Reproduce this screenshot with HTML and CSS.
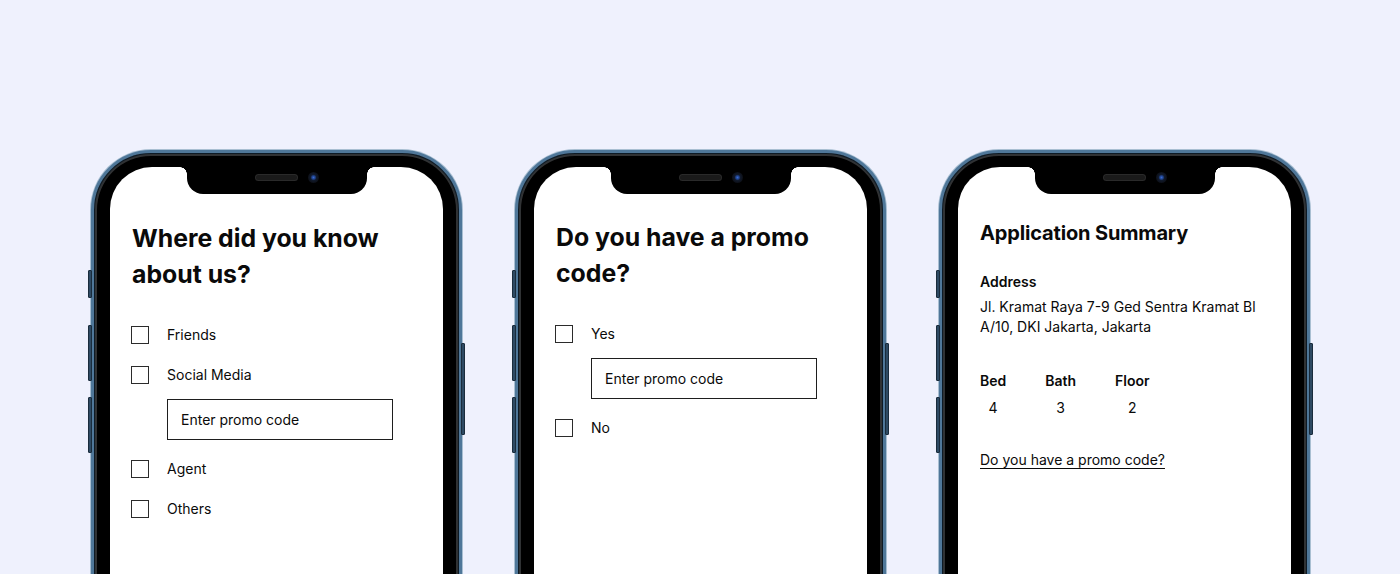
FILE: index.html
```html
<!DOCTYPE html>
<html lang="en">
<head>
<meta charset="utf-8">
<title>Onboarding screens</title>
<link rel="stylesheet" href="styles.css">
</head>
<body>
<div class="stage">
  <div class="phone">
    <span class="btn btn-l1"></span><span class="btn btn-l2"></span><span class="btn btn-l3"></span><span class="btn btn-r"></span>
    <div class="screen">
      <div class="notch"><span class="speaker"></span><span class="camera"></span></div>
      <h1 class="title">Where did you know about us?</h1>
      <div class="options">
        <div class="row"><span class="box"></span><span class="label">Friends</span></div>
        <div class="row"><span class="box"></span><span class="label">Social Media</span></div>
        <div class="promo">Enter promo code</div>
        <div class="row"><span class="box"></span><span class="label">Agent</span></div>
        <div class="row"><span class="box"></span><span class="label">Others</span></div>
      </div>
    </div>
  </div>

  <div class="phone">
    <span class="btn btn-l1"></span><span class="btn btn-l2"></span><span class="btn btn-l3"></span><span class="btn btn-r"></span>
    <div class="screen screen-up">
      <div class="notch"><span class="speaker"></span><span class="camera"></span></div>
      <h1 class="title">Do you have a promo code?</h1>
      <div class="options">
        <div class="row"><span class="box"></span><span class="label">Yes</span></div>
        <div class="promo">Enter promo code</div>
        <div class="row"><span class="box"></span><span class="label">No</span></div>
      </div>
    </div>
  </div>

  <div class="phone">
    <span class="btn btn-l1"></span><span class="btn btn-l2"></span><span class="btn btn-l3"></span><span class="btn btn-r"></span>
    <div class="screen screen-up">
      <div class="notch"><span class="speaker"></span><span class="camera"></span></div>
      <h1 class="summary-title">Application Summary</h1>
      <div class="field-label">Address</div>
      <p class="address">Jl. Kramat Raya 7-9 Ged Sentra Kramat Bl A/10, DKI Jakarta, Jakarta</p>
      <div class="specs">
        <div class="spec"><div class="spec-name">Bed</div><div class="spec-val">4</div></div>
        <div class="spec"><div class="spec-name">Bath</div><div class="spec-val">3</div></div>
        <div class="spec"><div class="spec-name">Floor</div><div class="spec-val">2</div></div>
      </div>
      <a class="promo-link" href="#">Do you have a promo code?</a>
    </div>
  </div>
</div>
</body>
</html>
```

FILE: styles.css
```css
* { box-sizing: border-box; }
html, body {
  margin: 0;
  padding: 0;
  height: 574px;
  overflow: hidden;
  background: #eff1fd;
  font-family: Inter, "Noto Sans", sans-serif;
  color: #0a0a0a;
}
.stage {
  display: flex;
  justify-content: center;
  gap: 53px;
  padding-top: 150px;
  padding-left: 1px;
}
.phone {
  position: relative;
  width: 371px;
  height: 640px;
  flex: none;
  border-radius: 60px;
  background: #000;
  border: 3px solid #4f7799;
  box-shadow: 0 0 0 1px #a9bfd2, inset 0 0 0 1px #0d1a25, inset 0 0 0 3px #303234;
  padding: 14px 16px 16px;
}
.btn {
  position: absolute;
  width: 4px;
  background: #2e4a63;
  border: 1px solid #1a2c3c;
  border-radius: 1px;
}
.btn-l1 { left: -6px; top: 117px; height: 28px; }
.btn-l2 { left: -6px; top: 172px; height: 56px; }
.btn-l3 { left: -6px; top: 244px; height: 56px; }
.btn-r  { right: -6px; top: 190px; height: 92px; }

.screen {
  position: relative;
  height: 100%;
  background: #fff;
  border-radius: 42px;
  padding: 53px 22px 0;
}
.screen-up { padding-top: 52px; }
.notch {
  position: absolute;
  top: 0;
  left: 50%;
  width: 180px;
  height: 27px;
  margin-left: -90px;
  background: #000;
  border-radius: 0 0 16px 16px;
}
.notch::before, .notch::after {
  content: "";
  position: absolute;
  top: 0;
  width: 7px;
  height: 7px;
}
.notch::before {
  left: -7px;
  background: radial-gradient(circle at 0 100%, transparent 6.5px, #000 7px);
}
.notch::after {
  right: -7px;
  background: radial-gradient(circle at 100% 100%, transparent 6.5px, #000 7px);
}
.speaker {
  position: absolute;
  left: 69px;
  top: 8px;
  width: 41px;
  height: 5px;
  border-radius: 3px;
  background: #1a1a1a;
  box-shadow: 0 0 0 1px #2a2a2a;
}
.camera {
  position: absolute;
  left: 121px;
  top: 5px;
  width: 11px;
  height: 11px;
  border-radius: 50%;
  background: radial-gradient(circle, #3a6ad0 0, #1d3f86 1.8px, #111a2c 3px, #0c0f16 5.5px);
}

.title {
  margin: 0;
  font-size: 24.8px;
  font-weight: 700;
  line-height: 36px;
  letter-spacing: 0;
}
.options {
  margin-top: 34px;
  display: flex;
  flex-direction: column;
}
.row {
  display: flex;
  align-items: center;
  height: 18px;
  gap: 18px;
  font-size: 14px;
}
.row + .row { margin-top: 22px; }
.promo + .row { margin-top: 20px; }
.box {
  width: 18px;
  height: 18px;
  flex: none;
  border: 1.5px solid #2b2b2b;
  margin-left: -1px;
}
.label { line-height: 18px; }
.promo {
  margin: 15px 0 0 35px;
  width: 226px;
  height: 41px;
  border: 1px solid #1e1e1e;
  display: flex;
  align-items: center;
  padding-left: 13px;
  font-size: 14px;
}

.summary-title {
  margin: 0;
  font-size: 20px;
  font-weight: 700;
  line-height: 29px;
  letter-spacing: -0.15px;
}
.field-label {
  margin-top: 24px;
  font-size: 14px;
  font-weight: 600;
  line-height: 20px;
}
.address {
  margin: 5px 0 0;
  font-size: 14px;
  line-height: 20px;
}
.specs {
  margin-top: 34px;
  display: flex;
  gap: 39px;
}
.spec { text-align: center; font-size: 14px; line-height: 20px; }
.spec-name { font-weight: 600; }
.spec-val { margin-top: 7px; }
.promo-link {
  display: inline-block;
  margin-top: 32px;
  font-size: 14px;
  line-height: 20px;
  color: #0a0a0a;
  text-decoration: underline;
  text-underline-offset: 3px;
  text-decoration-thickness: 1px;
}
```
